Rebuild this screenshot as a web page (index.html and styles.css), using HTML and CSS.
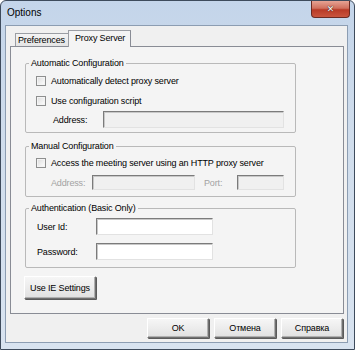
FILE: index.html
```html
<!DOCTYPE html>
<html lang="en">
<head>
    <meta charset="UTF-8">
    <title>Options</title>
    <link rel="stylesheet" href="styles.css">
</head>
<body>
    <div class="window">
        <div class="titlebar">
            <span class="title">Options</span>
            <button class="close-button">&#x2715;</button>
        </div>

        <div class="client">
            <!-- Tabs -->
            <div class="tabs">
                <div class="tab">Preferences</div>
                <div class="tab active">Proxy Server</div>
            </div>

            <div class="tab-panel">
                <fieldset class="group auto-group">
                    <legend>Automatic Configuration</legend>
                    <div class="check-row first">
                        <input type="checkbox" id="autoDetect" class="check">
                        <label for="autoDetect">Automatically detect proxy server</label>
                    </div>
                    <div class="check-row">
                        <input type="checkbox" id="useScript" class="check">
                        <label for="useScript">Use configuration script</label>
                    </div>
                    <div class="field-row script-row">
                        <span class="field-label script-label">Address:</span>
                        <input type="text" class="text-input disabled script-input" disabled>
                    </div>
                </fieldset>

                <fieldset class="group manual-group">
                    <legend>Manual Configuration</legend>
                    <div class="check-row first">
                        <input type="checkbox" id="useHttp" class="check">
                        <label for="useHttp">Access the meeting server using an HTTP proxy server</label>
                    </div>
                    <div class="field-row proxy-row">
                        <span class="field-label grey proxy-label">Address:</span>
                        <input type="text" class="text-input disabled proxy-input" disabled>
                        <span class="field-label grey port-label">Port:</span>
                        <input type="text" class="text-input disabled port-input" disabled>
                    </div>
                </fieldset>

                <fieldset class="group auth-group">
                    <legend>Authentication (Basic Only)</legend>
                    <div class="field-row auth-row">
                        <span class="field-label auth-label">User Id:</span>
                        <input type="text" class="text-input auth-input">
                    </div>
                    <div class="field-row auth-row second">
                        <span class="field-label auth-label">Password:</span>
                        <input type="password" class="text-input auth-input">
                    </div>
                </fieldset>

                <button class="win-button ie-button">Use IE Settings</button>
            </div>

            <div class="dialog-buttons">
                <button class="win-button">OK</button>
                <button class="win-button">Отмена</button>
                <button class="win-button">Справка</button>
            </div>
        </div>
    </div>
</body>
</html>
```

FILE: styles.css
```css
/* Page */
body {
    margin: 0;
    background: #ffffff;
    font-family: "Liberation Sans", Arial, sans-serif;
    font-size: 9px;
    letter-spacing: -0.15px;
    color: #000000;
}

/* Window frame */
.window {
    width: 355px;
    height: 350px;
    box-sizing: border-box;
    border: 1px solid #3e4b5c;
    border-radius: 6px 6px 0 0;
    background: linear-gradient(#c4d5ea, #d0ddec 40%, #d8e3f0);
    display: flex;
    flex-direction: column;
}

.titlebar {
    height: 24px;
    display: flex;
    align-items: flex-start;
    padding-left: 6px;
}

.title {
    font-size: 10px;
    letter-spacing: 0;
    margin-top: 6px;
    color: #000000;
}

.close-button {
    margin-left: auto;
    margin-right: 4px;
    width: 39px;
    height: 17px;
    border: 1px solid #6b2a22;
    border-top: none;
    border-radius: 0 0 4px 4px;
    background: linear-gradient(#e6a394, #d0705e 45%, #b83a26 55%, #c9553e);
    color: #ffffff;
    font-family: "DejaVu Sans", sans-serif;
    font-size: 9px;
    font-weight: bold;
    line-height: 15px;
    padding: 0;
    text-shadow: 0 0 1px #3a1a14, 0 0 1px #3a1a14;
}

/* Client area */
.client {
    flex: 1;
    margin: 0 6px 6px 4px;
    border: 1px solid #8c9db2;
    background: #f0f0f0;
    padding: 0 3px 0 4px;
}

/* Tabs */
.tabs {
    height: 20px;
    display: flex;
    align-items: flex-end;
    padding-left: 5px;
}

.tab {
    box-sizing: border-box;
    height: 13px;
    width: 53px;
    border: 1px solid #9a9da3;
    border-bottom: none;
    border-right: none;
    background: linear-gradient(#f4f4f4, #e4e4e4);
    padding-left: 2px;
    line-height: 12px;
    white-space: nowrap;
}

.tab.active {
    height: 17px;
    width: 63px;
    margin-bottom: -1px;
    border-right: 1px solid #898c95;
    background: #f4f4f4;
    position: relative;
    padding-left: 6px;
    line-height: 14px;
}

.tab-panel {
    box-sizing: border-box;
    height: 268px;
    width: 334px;
    border: 1px solid #898c95;
    background: #f4f4f4;
    padding-top: 11px;
}

/* Group boxes */
.group {
    box-sizing: border-box;
    width: 271px;
    margin: 0 0 0 14px;
    padding: 0;
    border: 1px solid #b9b9b9;
    border-radius: 2px;
    min-width: 0;
}

.group legend {
    margin-left: 3px;
    padding: 0 2px;
    line-height: 10px;
    color: #000000;
}

.auto-group {
    padding-bottom: 4px;
}

.manual-group {
    margin-top: 8px;
    padding-bottom: 6px;
}

.auth-group {
    margin-top: 6px;
    padding-bottom: 7px;
}

/* Checkbox rows */
.check-row {
    display: flex;
    align-items: center;
    height: 14px;
    margin-top: 6px;
    padding-left: 10px;
}

.manual-group .check-row.first {
    margin-top: 5px;
}

.check {
    appearance: none;
    margin: 0 5px 0 0;
    width: 10px;
    height: 10px;
    box-sizing: border-box;
    border: 1px solid #8e8f8f;
    background: linear-gradient(135deg, #dcdcdc, #ffffff);
    box-shadow: inset 0 0 0 1px #f4f4f4;
}

/* Label + input rows */
.field-row {
    display: flex;
    align-items: center;
}

.field-label {
    flex-shrink: 0;
}

.field-label.grey {
    color: #a3a3a3;
}

.text-input {
    box-sizing: border-box;
    margin: 0;
    padding: 0;
    background: #ffffff;
    border-style: solid;
    border-width: 1px;
    border-color: #7b7b7b #e2e2e2 #e2e2e2 #7b7b7b;
    box-shadow: inset 1px 1px 0 #c8c8c8;
    font: inherit;
}

.text-input.disabled {
    background: #f0f0f0;
}

.script-row {
    margin-top: 3px;
    padding-left: 27px;
}

.script-label {
    width: 50px;
}

.script-input {
    width: 181px;
    height: 17px;
}

.proxy-row {
    margin-top: 5px;
    padding-left: 25px;
}

.proxy-label {
    width: 41px;
}

.proxy-input {
    width: 103px;
    height: 15px;
}

.port-label {
    width: 33px;
    margin-left: 9px;
}

.port-input {
    width: 47px;
    height: 15px;
}

.auth-row {
    margin-top: 5px;
    padding-left: 11px;
}

.auth-row.second {
    margin-top: 8px;
}

.auth-label {
    width: 59px;
}

.auth-input {
    width: 117px;
    height: 17px;
}

/* Buttons */
.win-button {
    box-sizing: border-box;
    height: 20px;
    width: 62px;
    padding: 0;
    font-family: "Liberation Sans", Arial, sans-serif;
    font-size: 9px;
    font-weight: normal;
    letter-spacing: -0.15px;
    color: #000000;
    background: linear-gradient(#f6f6f6, #ececec 50%, #e0e0e0);
    border: 1px solid;
    border-color: #ffffff #707070 #707070 #ffffff;
    box-shadow: inset -1px -1px 0 #b0b0b0, 1px 1px 0 #5a5a5a;
    border-radius: 1px;
}

.ie-button {
    width: 72px;
    height: 23px;
    margin: 8px 0 0 13px;
}

.dialog-buttons {
    display: flex;
    justify-content: flex-end;
    gap: 5px;
    margin-top: 4px;
    padding-right: 1px;
}
```
